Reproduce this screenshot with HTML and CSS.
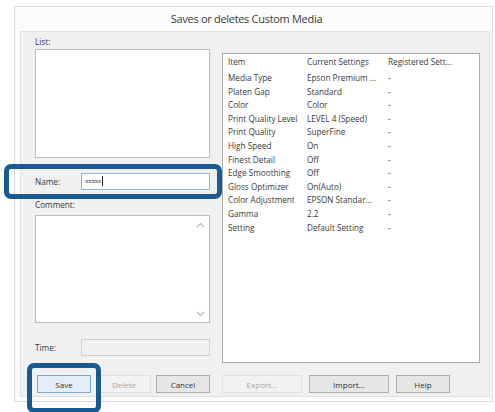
FILE: index.html
```html
<!DOCTYPE html>
<html lang="en">
<head>
    <meta charset="UTF-8">
    <title>Saves or deletes Custom Media</title>
    <link rel="stylesheet" href="styles.css">
</head>
<body>
    <div class="window">
        <div class="title-bar">Saves or deletes Custom Media</div>
        <div class="panel">
            <div class="columns">
                <div class="left-col">
                    <div class="label list-label">List:</div>
                    <div class="listbox"></div>

                    <div class="field-row name-row">
                        <span class="field-label">Name:</span>
                        <div class="input focused">xxxxx<span class="caret"></span></div>
                    </div>

                    <div class="label comment-label">Comment:</div>
                    <div class="textarea">
                        <div class="scroll">
                            <svg width="9" height="6" viewBox="0 0 9 6"><path d="M1 5 L4.5 1.5 L8 5" fill="none" stroke="#b5b5b5" stroke-width="1.1"/></svg>
                            <svg width="9" height="6" viewBox="0 0 9 6"><path d="M1 1 L4.5 4.5 L8 1" fill="none" stroke="#b5b5b5" stroke-width="1.1"/></svg>
                        </div>
                    </div>

                    <div class="field-row time-row">
                        <span class="field-label">Time:</span>
                        <div class="input readonly"></div>
                    </div>
                </div>

                <div class="settings">
                    <div class="settings-head">
                        <span>Item</span><span>Current Settings</span><span>Registered Sett...</span>
                    </div>
                    <div class="settings-row"><span>Media Type</span><span>Epson Premium ...</span><span>-</span></div>
                    <div class="settings-row"><span>Platen Gap</span><span>Standard</span><span>-</span></div>
                    <div class="settings-row"><span>Color</span><span>Color</span><span>-</span></div>
                    <div class="settings-row"><span>Print Quality Level</span><span>LEVEL 4 (Speed)</span><span>-</span></div>
                    <div class="settings-row"><span>Print Quality</span><span>SuperFine</span><span>-</span></div>
                    <div class="settings-row"><span>High Speed</span><span>On</span><span>-</span></div>
                    <div class="settings-row"><span>Finest Detail</span><span>Off</span><span>-</span></div>
                    <div class="settings-row"><span>Edge Smoothing</span><span>Off</span><span>-</span></div>
                    <div class="settings-row"><span>Gloss Optimizer</span><span>On(Auto)</span><span>-</span></div>
                    <div class="settings-row"><span>Color Adjustment</span><span>EPSON Standar...</span><span>-</span></div>
                    <div class="settings-row"><span>Gamma</span><span>2.2</span><span>-</span></div>
                    <div class="settings-row"><span>Setting</span><span>Default Setting</span><span>-</span></div>
                </div>
            </div>

            <div class="button-row">
                <button class="btn default">Save</button>
                <button class="btn disabled delete">Delete</button>
                <button class="btn">Cancel</button>
                <button class="btn wide disabled export">Export...</button>
                <button class="btn wide">Import...</button>
                <button class="btn">Help</button>
            </div>
        </div>
    </div>

    <!-- callout frames drawn over the dialog -->
    <div class="callout callout-name"></div>
    <div class="callout callout-save"></div>
</body>
</html>
```

FILE: styles.css
```css
body {
    margin: 0;
    width: 495px;
    height: 412px;
    background: #ffffff;
    font-family: 'Open Sans', 'Noto Sans', sans-serif;
    font-size: 8.2px;
    color: #3a3a3a;
    position: relative;
    overflow: hidden;
}

.window {
    margin: 6px 0 0 14px;
    width: 477px;
    height: 394px;
    border: 1px solid #dcdcdc;
    background: #fbfbfb;
    display: flex;
    flex-direction: column;
}

.title-bar {
    height: 24px;
    line-height: 24px;
    text-align: center;
    font-size: 11px;
    letter-spacing: -0.3px;
    color: #3c3c3c;
    padding-right: 14px;
}

.panel {
    margin: 0 2px 4px 5px;
    flex: 1;
    background: #f0f0f0;
    border: 1px solid #e1e1e1;
    padding: 4px 9px 0 14px;
}

.columns {
    display: grid;
    grid-template-columns: 175px 1fr;
    column-gap: 12px;
}

.label {
    height: 12px;
    line-height: 12px;
}

.list-label {
    margin-bottom: 1px;
}

.listbox {
    height: 107px;
    background: #fff;
    border: 1px solid #bdbdbd;
}

.field-row {
    display: flex;
    align-items: center;
}

.field-label {
    width: 46px;
}

.input {
    flex: 1;
    height: 15px;
    line-height: 15px;
    background: #fff;
    border: 1px solid #c4c4c4;
    padding-left: 3px;
    font-family: 'Liberation Serif', serif;
    font-size: 7px;
    letter-spacing: -0.3px;
    color: #333;
}

.input.focused {
    border-color: #8cb6e0;
}

.caret {
    display: inline-block;
    width: 1px;
    height: 10px;
    background: #222;
    vertical-align: middle;
    margin-left: 1px;
}

.name-row {
    margin-top: 15px;
    height: 16px;
}

.comment-label {
    margin-top: 10px;
    margin-bottom: 4px;
}

.textarea {
    height: 106px;
    background: #fff;
    border: 1px solid #bdbdbd;
    display: flex;
    justify-content: flex-end;
}

.scroll {
    width: 17px;
    display: flex;
    flex-direction: column;
    justify-content: space-between;
    align-items: center;
    padding: 6px 0 5px;
}

.time-row {
    margin-top: 16px;
    height: 17px;
}

.input.readonly {
    background: #f0f0f0;
    border-color: #cfcfcf;
}

.settings {
    margin-top: 17px;
    height: 307px;
    background: #fff;
    border: 1px solid #adadad;
    padding: 1px 0 0 5px;
}

.settings-head,
.settings-row {
    display: grid;
    grid-template-columns: 79px 81px 1fr;
    white-space: nowrap;
}

.settings-head {
    height: 14px;
    line-height: 14px;
    margin-bottom: 2px;
}

.settings-row {
    height: 13.6px;
    line-height: 13.6px;
}

.button-row {
    display: flex;
    margin-top: 12px;
    padding-left: 2px;
}

.btn {
    width: 54px;
    height: 18px;
    margin-right: 6px;
    padding: 0;
    font-family: inherit;
    font-size: 8px;
    color: #333;
    background: #e6e6e6;
    border: 1px solid #adadad;
}

.btn.wide {
    width: 80px;
    margin-right: 7px;
}

.btn.default {
    border-color: #7aa7d4;
    background: #e5eef7;
}

.btn.disabled {
    color: #a8a8a8;
    background: #f2f2f2;
    border-color: #e0e0e0;
}

.btn.delete {
    margin-right: 5px;
}

.btn.delete + .btn {
    margin-right: 12px;
}

.callout {
    position: absolute;
    border: 5px solid #1a5a93;
    border-radius: 7px;
}

.callout-name {
    left: 4px;
    top: 164px;
    width: 208px;
    height: 25px;
}

.callout-save {
    left: 27px;
    top: 363px;
    width: 64px;
    height: 40px;
}
```
